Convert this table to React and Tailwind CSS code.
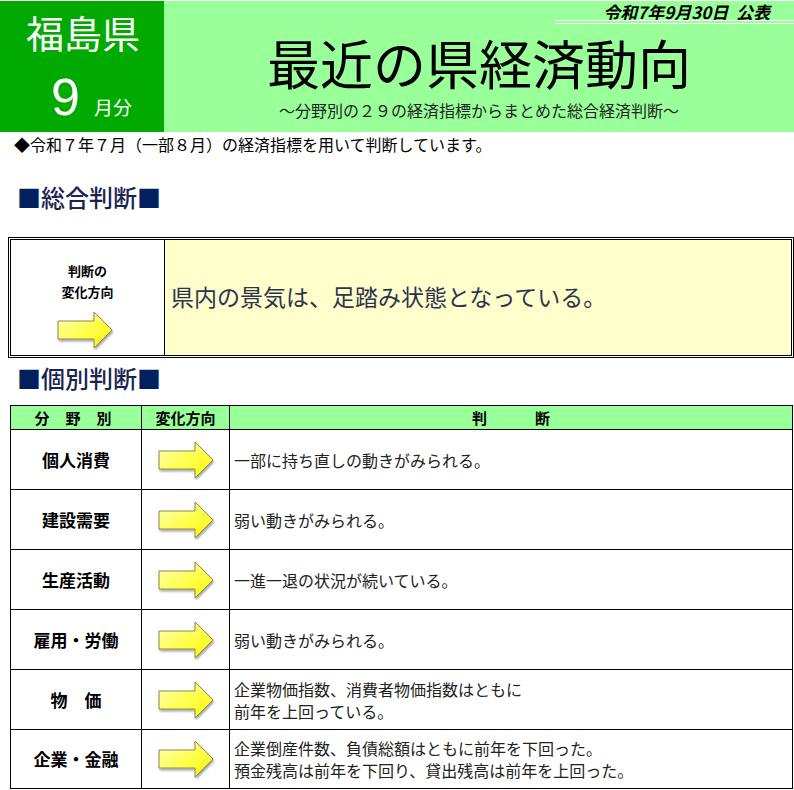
import React from 'react';

const JP = { fontFamily: '"Noto Sans CJK JP", "Noto Sans", sans-serif' };

const Arrow = ({ className = '' }) => (
  <svg viewBox="0 0 60 40" className={className}>
    <defs>
      <linearGradient id="arrowFill" x1="0" y1="0" x2="1" y2="1">
        <stop offset="0" stopColor="#ffffb8" />
        <stop offset="0.6" stopColor="#ffff40" />
        <stop offset="1" stopColor="#f4f400" />
      </linearGradient>
      <filter id="arrowShadow" x="-20%" y="-20%" width="140%" height="150%">
        <feDropShadow dx="1" dy="2" stdDeviation="1.2" floodColor="#000" floodOpacity="0.35" />
      </filter>
    </defs>
    <path
      d="M2 11 H38 V2 L56 20 L38 38 V29 H2 Z"
      fill="url(#arrowFill)"
      stroke="#8a8a50"
      strokeWidth="1"
      filter="url(#arrowShadow)"
    />
  </svg>
);

const rows = [
  { label: '個人消費', lines: ['一部に持ち直しの動きがみられる。'] },
  { label: '建設需要', lines: ['弱い動きがみられる。'] },
  { label: '生産活動', lines: ['一進一退の状況が続いている。'] },
  { label: '雇用・労働', lines: ['弱い動きがみられる。'] },
  { label: '物　価', lines: ['企業物価指数、消費者物価指数はともに', '前年を上回っている。'] },
  { label: '企業・金融', lines: ['企業倒産件数、負債総額はともに前年を下回った。', '預金残高は前年を下回り、貸出残高は前年を上回った。'] },
];

export default function App() {
  return (
    <div className="w-[794px] h-[790px] bg-white overflow-hidden" style={JP}>
      {/* Header */}
      <div className="flex h-[131px] mt-[1px]">
        <div className="w-[164px] bg-[#00aa00] text-white flex flex-col">
          <div className="text-[38px] leading-none pl-[26px] pt-[12px]">福島県</div>
          <div className="flex items-end pl-[51px] pt-[20px]">
            <span className="text-[52px] leading-none" style={{ fontFamily: '"Liberation Sans", sans-serif' }}>9</span>
            <span className="text-[19px] leading-none ml-[14px] mb-[7px]">月分</span>
          </div>
        </div>
        <div className="flex-1 bg-[#99ff99] flex flex-col">
          <div className="flex flex-col items-end">
            <div className="pr-[24px] pt-[2px] text-[17px] leading-[17px] font-bold italic text-black">令和7年9月30日&nbsp;&nbsp;公表</div>
            <div className="w-[239px] h-[4px] border-t border-b border-white mt-[0px]"></div>
          </div>
          <div className="text-center text-[53px] leading-none mt-[12px] text-black">最近の県経済動向</div>
          <div className="text-center text-[16px] leading-none mt-[13px] text-[#222]">～分野別の２９の経済指標からまとめた総合経済判断～</div>
        </div>
      </div>

      {/* Note */}
      <div className="pl-[14px] pt-[3px] text-[16px] leading-[18px] text-black">◆令和７年７月（一部８月）の経済指標を用いて判断しています。</div>

      {/* Overall */}
      <div className="pl-[17px] mt-[32px] text-[24px] leading-none text-[#1a2450] flex items-center">
        <span className="text-[#002060]">■</span>
        <span className="font-medium">総合判断</span>
        <span className="text-[#002060]">■</span>
      </div>

      <div className="ml-[8px] w-[786px] mt-[28px] border-[3px] border-double border-black h-[121px] flex">
        <div className="w-[154px] border-r border-black flex flex-col items-center pt-[20px]">
          <div className="text-[13px] font-bold leading-[21px] text-center">判断の<br />変化方向</div>
          <Arrow className="w-[60px] h-[40px] mt-[8px] ml-[-3px]" />
        </div>
        <div className="flex-1 bg-[#ffffcc] flex items-center pl-[6px] pb-[2px]">
          <span className="text-[23px] text-[#2e3450] leading-none">県内の景気は、足踏み状態となっている。</span>
        </div>
      </div>

      {/* Individual */}
      <div className="pl-[17px] mt-[8px] text-[24px] leading-none text-[#1a2450] flex items-center">
        <span className="text-[#002060]">■</span>
        <span className="font-medium">個別判断</span>
        <span className="text-[#002060]">■</span>
      </div>

      <div className="mx-[10px] mt-[15px] border border-black w-[783px]">
        <div className="grid grid-cols-[131px_88px_1fr] h-[24px] bg-[#99ff99] border-b border-black text-[15px] font-bold leading-none">
          <div className="border-r border-black flex items-center justify-center gap-[16px] pr-[6px]"><span>分</span><span>野</span><span>別</span></div>
          <div className="border-r border-black flex items-center justify-center">変化方向</div>
          <div className="flex items-center justify-center gap-[48px]"><span>判</span><span>断</span></div>
        </div>
        {rows.map((r, i) => (
          <div key={r.label} className={`grid grid-cols-[131px_88px_1fr] ${i < rows.length - 1 ? 'h-[60px] border-b border-black' : 'h-[58px]'}`}>
            <div className="border-r border-black flex items-center justify-center text-[17px] font-bold text-black">{r.label}</div>
            <div className="border-r border-black flex items-center justify-center">
              <Arrow className="w-[60px] h-[40px] ml-[2px]" />
            </div>
            <div className="flex flex-col justify-center pl-[4px] text-[16px] leading-[22px] text-[#222]">
              {r.lines.map((l) => (
                <div key={l}>{l}</div>
              ))}
            </div>
          </div>
        ))}
      </div>
    </div>
  );
}
